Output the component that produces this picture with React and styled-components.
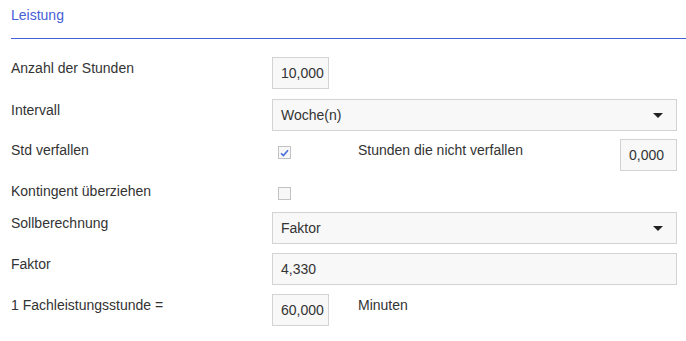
import React from 'react';
import styled, { createGlobalStyle } from 'styled-components';

const GlobalStyle = createGlobalStyle`
  body {
    margin: 0;
    background: #fff;
    font-family: "Liberation Sans", Arial, sans-serif;
    font-size: 14px;
    color: #333;
  }
`;

const Panel = styled.section`
  padding: 0 9px 0 11px;
`;

const Title = styled.h2`
  margin: 0 -9px 18px 0;
  padding: 6px 0 14px;
  font-size: 14px;
  font-weight: normal;
  line-height: 18px;
  color: #4660d8;
  border-bottom: 1px solid #4660d8;
`;

const Row = styled.div`
  display: grid;
  grid-template-columns: 261px 1fr;
  margin-bottom: ${({ $gap }) => $gap ?? 9}px;
`;

const Label = styled.label`
  padding-top: 2px;
  line-height: 18px;
`;

const Control = styled.div`
  display: flex;
  align-items: flex-start;
`;

const Sub = styled.div`
  display: grid;
  grid-template-columns: 86px 1fr auto;
  align-items: start;
`;

const Field = styled.div`
  box-sizing: border-box;
  height: 32px;
  width: ${({ $wide }) => ($wide ? '100%' : '57px')};
  padding: 0 8px;
  display: flex;
  align-items: center;
  justify-content: space-between;
  background: #f8f8f8;
  border: 1px solid #d3d3d3;
  color: #333;
`;

const Caret = styled.span`
  width: 0;
  height: 0;
  margin-right: 5px;
  border-left: 5px solid transparent;
  border-right: 5px solid transparent;
  border-top: 5px solid #222;
`;

const Box = styled.span`
  box-sizing: border-box;
  display: inline-flex;
  align-items: center;
  justify-content: center;
  width: 13px;
  height: 13px;
  margin: ${({ $top }) => $top}px 0 0 6px;
  background: #f7f7f7;
  border: 1px solid #c2c2c2;
`;

const Text = styled.span`
  padding-top: 2px;
  line-height: 18px;
`;

const Check = ({ on, top }) => (
  <Box $top={top}>
    {on && (
      <svg width="9" height="8" viewBox="0 0 9 8">
        <path d="M1 4.2 L3.4 6.6 L8 1.2" fill="none" stroke="#4a6fd8" strokeWidth="1.6" />
      </svg>
    )}
  </Box>
);

const Select = ({ value }) => (
  <Field $wide>
    {value}
    <Caret />
  </Field>
);

const App = () => (
  <Panel>
    <GlobalStyle />
    <Title>Leistung</Title>

    <Row $gap={10}>
      <Label>Anzahl der Stunden</Label>
      <Control><Field>10,000</Field></Control>
    </Row>

    <Row $gap={8}>
      <Label>Intervall</Label>
      <Control><Select value="Woche(n)" /></Control>
    </Row>

    <Row $gap={9}>
      <Label>Std verfallen</Label>
      <Sub>
        <Check on top={7} />
        <Text>Stunden die nicht verfallen</Text>
        <Field>0,000</Field>
      </Sub>
    </Row>

    <Row $gap={12}>
      <Label>Kontingent überziehen</Label>
      <Control><Check top={7} /></Control>
    </Row>

    <Row>
      <Label>Sollberechnung</Label>
      <Control><Select value="Faktor" /></Control>
    </Row>

    <Row>
      <Label>Faktor</Label>
      <Control><Field $wide>4,330</Field></Control>
    </Row>

    <Row>
      <Label>1 Fachleistungsstunde =</Label>
      <Sub>
        <Field>60,000</Field>
        <Text>Minuten</Text>
      </Sub>
    </Row>
  </Panel>
);

export default App;
